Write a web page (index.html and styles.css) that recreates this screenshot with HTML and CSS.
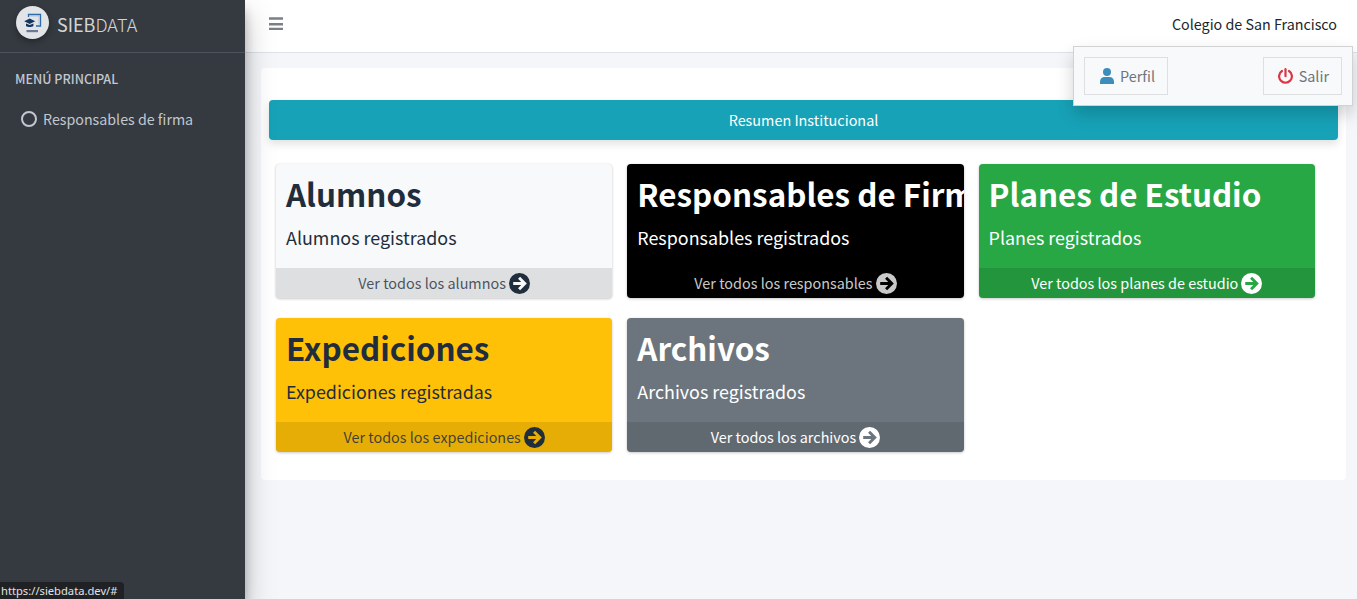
FILE: index.html
```html
<!DOCTYPE html>
<html lang="es">
<head>
<meta charset="utf-8">
<title>SIEBDATA</title>
<link rel="stylesheet" href="styles.css">
</head>
<body>
<aside class="sidebar">
  <div class="brand">
    <span class="brand-logo">
      <svg width="33" height="33" viewBox="0 0 33 33">
        <circle cx="16.5" cy="16.5" r="16.5" fill="#e2e4e8"/>
        <path d="M12.500 11V8.500h12v11.500H20" fill="none" stroke="#2f6aa8" stroke-width="1.300"/>
        <path d="M14 10h9v8.500" fill="none" stroke="#a9bdd8" stroke-width=".8"/>
        <path d="M13.700 12.500l5.500 2.700-5.500 2.700-5.500-2.700z" fill="#16375f"/>
        <path d="M10 17.400v2.600c1.700 1.300 5.700 1.300 7.400 0v-2.600l-3.700 1.700z" fill="#16375f"/>
        <rect x="10.500" y="24" width="11.500" height="2.200" fill="#6b7a92"/>
      </svg>
    </span>
    <span class="brand-text"><b>SIEB</b>DATA</span>
  </div>
  <nav class="menu">
    <div class="menu-header">MENÚ PRINCIPAL</div>
    <a class="menu-item" href="#"><span class="ring"></span>Responsables de firma</a>
  </nav>
</aside>
<div class="main">
  <header class="topbar">
    <svg class="burger" width="14" height="16" viewBox="0 0 14 16"><path d="M0 1.300h14v2.400H0zM0 7h14v2.400H0zM0 11.700h14v2.400H0z" fill="#7a8087"/></svg>
    <span class="school">Colegio de San Francisco</span>
  </header>
  <main class="content">
    <section class="panel">
      <div class="banner">Resumen Institucional</div>
      <div class="grid">
        <article class="card light">
          <div class="card-body"><h3>Alumnos</h3><p>Alumnos registrados</p></div>
          <a class="card-foot" href="#">Ver todos los alumnos <svg class="go" viewBox="0 0 20 20"><circle cx="10" cy="10" r="10" class="go-bg"/><path d="M4 10h11M9.600 4.600l5.400 5.400-5.400 5.400" class="go-fg"/></svg></a>
        </article>
        <article class="card black">
          <div class="card-body"><h3>Responsables de Firma</h3><p>Responsables registrados</p></div>
          <a class="card-foot" href="#">Ver todos los responsables <svg class="go" viewBox="0 0 20 20"><circle cx="10" cy="10" r="10" class="go-bg"/><path d="M4 10h11M9.600 4.600l5.400 5.400-5.400 5.400" class="go-fg"/></svg></a>
        </article>
        <article class="card green">
          <div class="card-body"><h3>Planes de Estudio</h3><p>Planes registrados</p></div>
          <a class="card-foot" href="#">Ver todos los planes de estudio <svg class="go" viewBox="0 0 20 20"><circle cx="10" cy="10" r="10" class="go-bg"/><path d="M4 10h11M9.600 4.600l5.400 5.400-5.400 5.400" class="go-fg"/></svg></a>
        </article>
        <article class="card yellow">
          <div class="card-body"><h3>Expediciones</h3><p>Expediciones registradas</p></div>
          <a class="card-foot" href="#">Ver todos los expediciones <svg class="go" viewBox="0 0 20 20"><circle cx="10" cy="10" r="10" class="go-bg"/><path d="M4 10h11M9.600 4.600l5.400 5.400-5.400 5.400" class="go-fg"/></svg></a>
        </article>
        <article class="card gray">
          <div class="card-body"><h3>Archivos</h3><p>Archivos registrados</p></div>
          <a class="card-foot" href="#">Ver todos los archivos <svg class="go" viewBox="0 0 20 20"><circle cx="10" cy="10" r="10" class="go-bg"/><path d="M4 10h11M9.600 4.600l5.400 5.400-5.400 5.400" class="go-fg"/></svg></a>
        </article>
      </div>
    </section>
  </main>
</div>
<div class="user-pop">
  <a class="pop-btn perfil" href="#">
    <svg width="14" height="16" viewBox="0 0 14 16"><circle cx="7" cy="4" r="4" fill="#3c8dbc"/><path d="M0 16v-2.500C0 11 2 9 4.500 9h5c2.500 0 4.500 2 4.500 4.500V16z" fill="#3c8dbc"/></svg>
    Perfil
  </a>
  <a class="pop-btn salir" href="#">
    <svg width="15" height="16" viewBox="0 0 15 16"><path d="M7.500 1.200v7" stroke="#dc3545" stroke-width="2.200" stroke-linecap="round" fill="none"/><path d="M4 3a6.400 6.400 0 1 0 7 0" stroke="#dc3545" stroke-width="2.200" stroke-linecap="round" fill="none"/></svg>
    Salir
  </a>
</div>
<div class="status">https://siebdata.dev/#</div>
</body>
</html>
```
FILE: styles.css
```css
* { box-sizing: border-box; }
html, body { height: 100%; }
body {
  margin: 0;
  display: flex;
  height: 599px;
  overflow: hidden;
  background: #f4f6f9;
  color: #212529;
  font-family: "Noto Sans CJK SC", "Noto Sans CJK JP", "Noto Sans", sans-serif;
  font-size: 14.400px;
  line-height: 22px;
}
a { text-decoration: none; color: inherit; }

.sidebar {
  width: 245px;
  flex: none;
  background: #343a40;
  box-shadow: 0 14px 28px rgba(0,0,0,.25), 0 10px 10px rgba(0,0,0,.22);
  position: relative;
  z-index: 2;
}
.brand {
  height: 53px;
  display: flex;
  align-items: flex-start;
  padding: 6px 0 0 16px;
  border-bottom: 1px solid #4b545c;
}
.brand-logo {
  width: 33px;
  height: 33px;
  border-radius: 50%;
  box-shadow: 0 3px 6px rgba(0,0,0,.3);
  display: block;
}
.brand-logo svg { display: block; }
.brand-text {
  margin-left: 8px;
  font-size: 18px;
  line-height: 36px;
  font-weight: 300;
  color: rgba(255,255,255,.8);
}
.brand-text b { font-weight: 400; }
.menu { padding: 14px 0 0 15px; }
.menu-header {
  font-size: 12.600px;
  line-height: 24px;
  font-weight: 500;
  color: #c2c7d0;
}
.menu-item {
  display: flex;
  align-items: center;
  margin-top: 12px;
  padding-left: 6px;
  height: 32px;
  font-size: 14.250px;
  color: #c2c7d0;
}
.ring {
  width: 16px;
  height: 16px;
  border: 2px solid #c2c7d0;
  border-radius: 50%;
  margin-right: 6px;
}

.main { flex: 1; min-width: 0; display: flex; flex-direction: column; }
.topbar {
  height: 53px;
  flex: none;
  background: #fff;
  border-bottom: 1px solid #dee2e6;
  display: flex;
  align-items: center;
  justify-content: space-between;
  padding: 0 20px 4px 24px;
}
.burger { display: block; }
.school { font-size: 14.300px; }

.content { padding: 15px 11px 0 16px; }
.panel {
  background: #fff;
  border-radius: 4px;
  height: 412px;
  padding: 32px 8px 0 8px;
}
.banner {
  height: 40px;
  background: #17a2b8;
  color: #fff;
  text-align: center;
  line-height: 39px;
  border-radius: 4px;
  box-shadow: 0 4px 8px rgba(0,0,0,.12);
}
.grid {
  display: grid;
  grid-template-columns: repeat(3, 336.300px);
  grid-auto-rows: 134px;
  gap: 20px 15px;
  margin: 24px 0 0 7px;
}
.card {
  display: flex;
  flex-direction: column;
  border-radius: 4px;
  overflow: hidden;
  box-shadow: 0 0 1px rgba(0,0,0,.13), 0 1px 3px rgba(0,0,0,.2);
}
.card-body { flex: 1; min-height: 0; padding: 10px 10px 10px; white-space: nowrap; }
.card-body h3 {
  margin: 0;
  font-size: 31.400px;
  line-height: 40px;
  font-weight: 700;
}
.card-body p {
  margin: 8px 0 0;
  font-size: 17.900px;
  line-height: 30px;
}
.card-foot {
  height: 30px;
  flex: none;
  display: flex;
  align-items: center;
  justify-content: center;
  gap: 3px;
  background: rgba(0,0,0,.1);
}
.go { width: 21px; height: 21px; display: block; }
.go-fg { fill: none; stroke-width: 2.800; }

.light { background: #f8f9fa; color: #1f2d3d; }
.light .card-foot { color: rgba(31,45,61,.8); }
.light .go-bg { fill: #1f2d3d; }
.light .go-fg { stroke: #f8f9fa; }
.black { background: #000; color: #fff; }
.black .card-foot { background: transparent; color: rgba(255,255,255,.8); }
.black .go-bg { fill: #c9c9c9; }
.black .go-fg { stroke: #000; }
.green { background: #28a745; color: #fff; }
.green .go-bg { fill: #fff; }
.green .go-fg { stroke: #28a745; }
.yellow { background: #ffc107; color: #1f2d3d; }
.yellow .card-foot { color: rgba(31,45,61,.85); }
.yellow .go-bg { fill: #1f2d3d; }
.yellow .go-fg { stroke: #e5ad06; }
.gray { background: #6c757d; color: #fff; }
.gray .go-bg { fill: #fff; }
.gray .go-fg { stroke: #6c757d; }

.user-pop {
  position: absolute;
  left: 1073px;
  top: 46px;
  width: 280px;
  height: 60px;
  background: #f8f9fa;
  border: 1px solid #d0d2d4;
  box-shadow: 0 8px 16px rgba(0,0,0,.18);
  padding: 10px;
  display: flex;
  justify-content: space-between;
  z-index: 3;
}
.pop-btn {
  height: 38px;
  border: 1px solid #dddfe1;
  display: flex;
  align-items: center;
  gap: 6px;
  color: #6c757d;
}
.perfil { padding: 0 12px 0 15px; gap: 6px; }
.salir { padding: 0 12px 0 14px; }
.status {
  position: absolute;
  left: 0;
  bottom: 0;
  height: 17px;
  padding: 0 6px 0 1px;
  background: #202124;
  color: #e3e3e3;
  border-top-right-radius: 4px;
  font-family: "Noto Sans", sans-serif;
  font-size: 11.200px;
  line-height: 17px;
  z-index: 4;
}
```
